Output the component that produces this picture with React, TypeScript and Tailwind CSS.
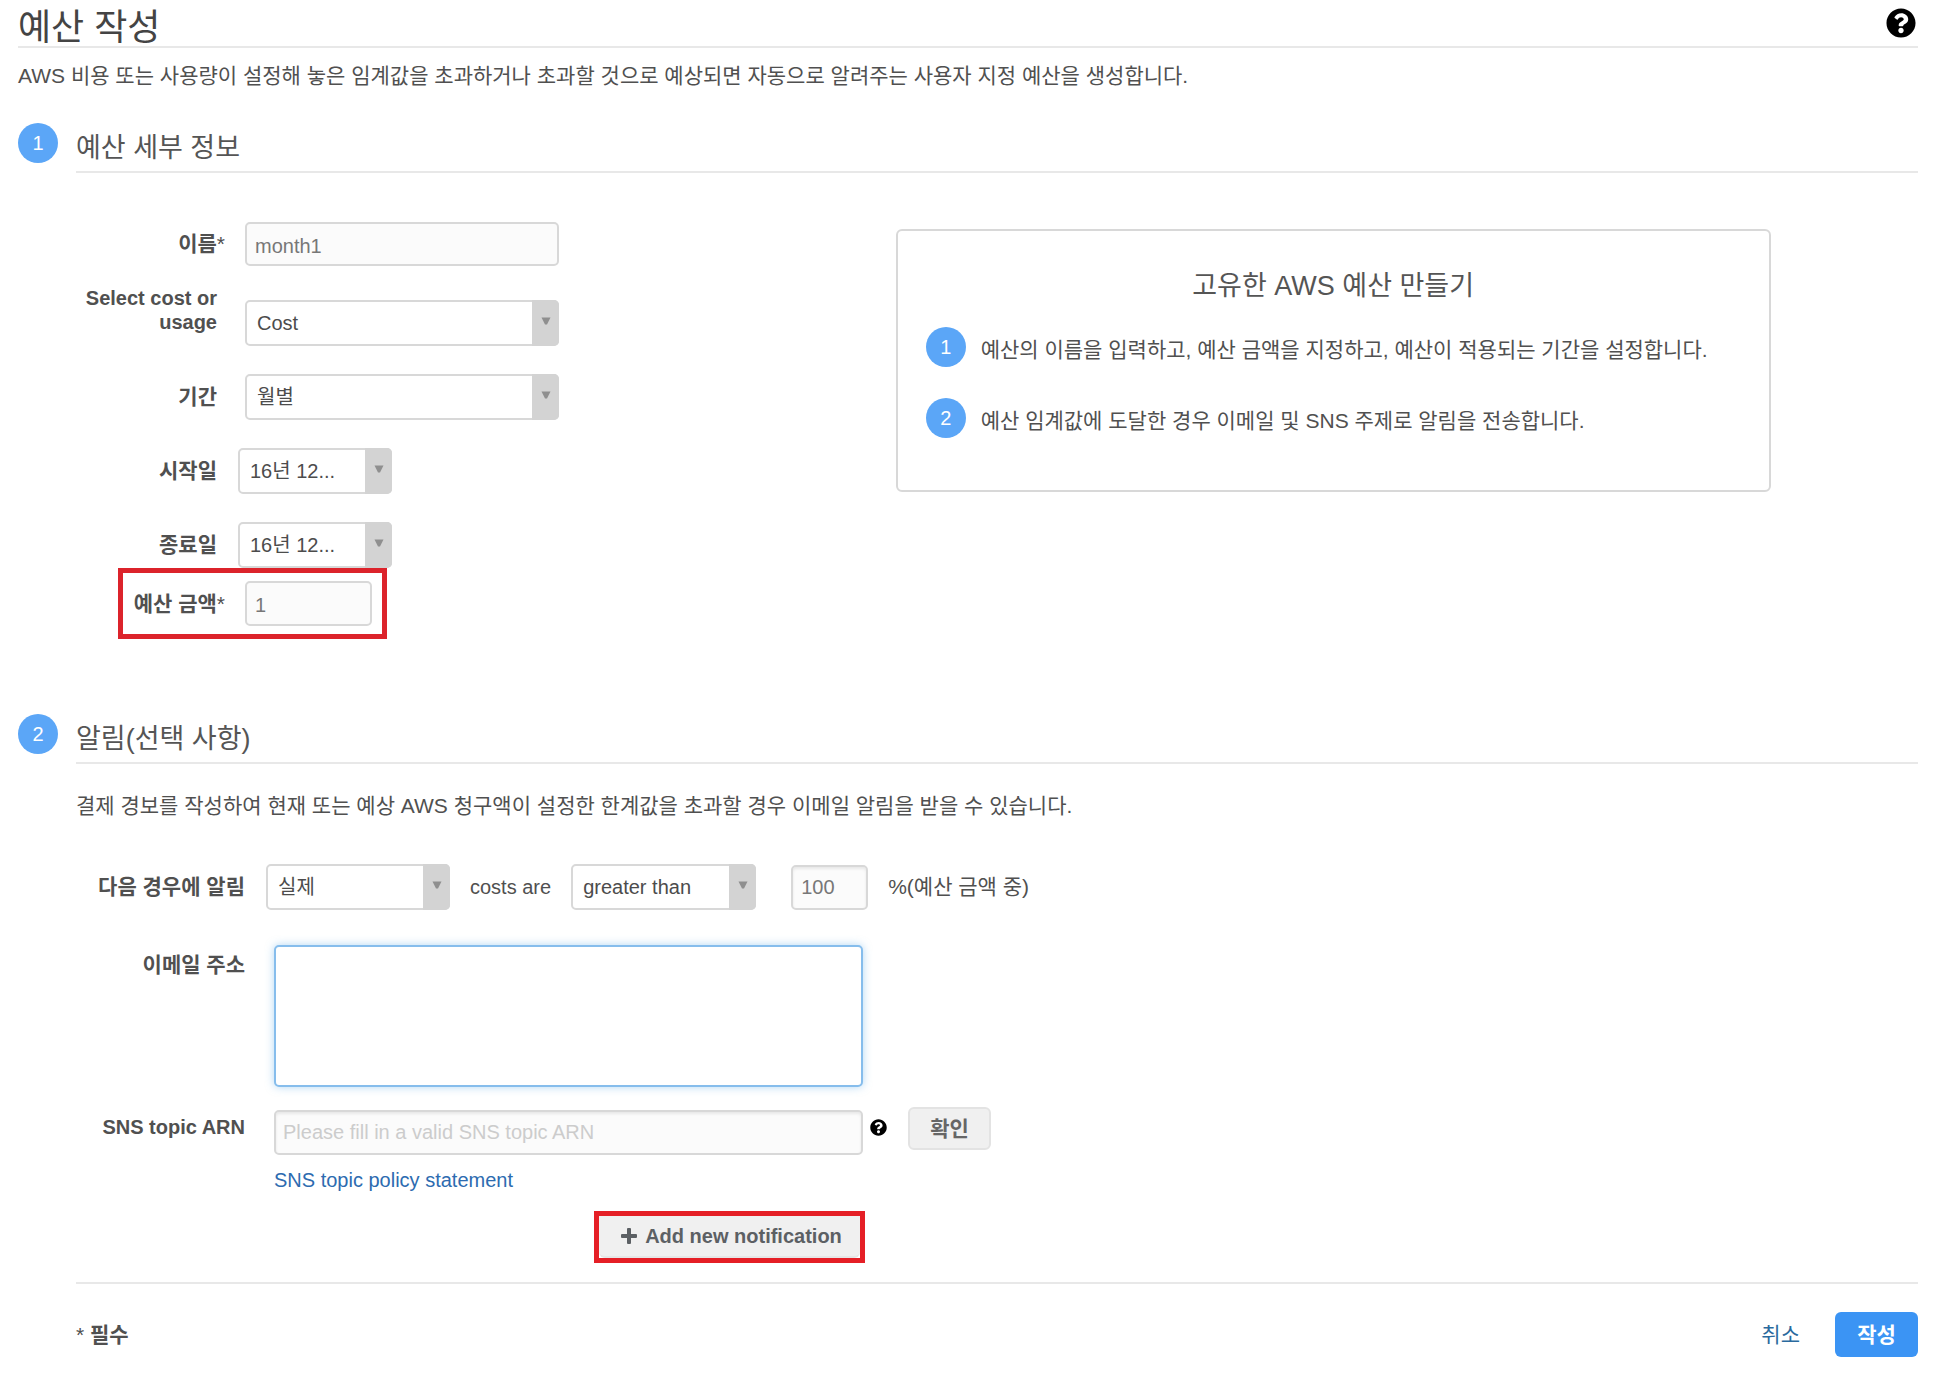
import type { ReactNode } from "react";
import { FaQuestionCircle } from "react-icons/fa";

function StepBadge({ n }: { n: number }) {
  return (
    <span className="flex size-10 shrink-0 items-center justify-center rounded-full bg-[#5ba6f7] text-[20px] leading-6 text-white">
      {n}
    </span>
  );
}

function SectionHeader({ n, title }: { n: number; title: string }) {
  return (
    <div className="flex items-start gap-[18px]">
      <StepBadge n={n} />
      <h2 className="grow border-b-2 border-[#e8e8e8] pt-[2px] text-[27px] leading-[46px] text-[#555]">
        {title}
      </h2>
    </div>
  );
}

function SelectBox({ id, value, width }: { id: string; value: string; width: string }) {
  return (
    <div className={`relative shrink-0 ${width}`}>
      <select
        id={id}
        aria-label={id}
        defaultValue={value}
        className="h-[46px] w-full appearance-none rounded-[5px] border-2 border-[#d8d8d8] bg-white pr-7 pl-[10px] text-[20px] text-[#4c4c4c]"
      >
        <option>{value}</option>
      </select>
      <span className="pointer-events-none absolute inset-y-0 right-0 flex w-[27px] items-center justify-center rounded-r-[5px] bg-[#d3d3d3]">
        <svg viewBox="0 0 10 8" className="mb-1 h-2 w-[10px]">
          <path d="M0.5 0.5h9L6 7.5H4z" fill="#8f8f8f" />
        </svg>
      </span>
    </div>
  );
}

function DetailRow({ id, label, gap, children }: { id: string; label: string; gap: string; children: ReactNode }) {
  return (
    <div className={`flex items-center ${gap}`}>
      <label htmlFor={id} className="w-[149px] shrink-0 pr-2 text-right text-[21px] leading-6 font-bold">
        {label}
      </label>
      {children}
    </div>
  );
}

const inputBase = "rounded-[5px] border-2 border-[#d8d8d8] bg-[#fbfbfb] text-[20px] text-[#777] ";

export default function App() {
  return (
    <main className="bg-white pr-[29px] pb-5 pl-[18px] font-['Liberation_Sans','Noto_Sans_CJK_KR',sans-serif] text-[#505050]">
      <header className="flex items-start justify-between border-b-2 border-[#e8e8e8] pt-2">
        <h1 className="pt-[2px] text-[36px] leading-9 text-[#444]">예산 작성</h1>
        <button type="button" aria-label="도움말" className="mr-[2px] text-black">
          <FaQuestionCircle size={30} />
        </button>
      </header>
      <p className="mt-4 text-[21px] leading-6">
        AWS 비용 또는 사용량이 설정해 놓은 임계값을 초과하거나 초과할 것으로 예상되면 자동으로 알려주는 사용자 지정 예산을 생성합니다.
      </p>

      <section className="mt-[35px]">
        <SectionHeader n={1} title="예산 세부 정보" />
        <div className="flex items-start pl-[58px]">
          <div className="w-[44.5%] pt-[49px]">
            <div className="flex items-center gap-5">
              <label htmlFor="name" className="w-[149px] shrink-0 text-right text-[21px] leading-6 font-bold">
                이름<span className="font-normal">*</span>
              </label>
              <input id="name" defaultValue="month1" className={inputBase + "h-11 w-[314px] pt-1 pl-2"} />
            </div>
            <div className="mt-5 flex items-start gap-5">
              <label htmlFor="cost" className="w-[149px] shrink-0 pr-2 text-right text-[20px] leading-6 font-bold">
                Select cost or usage
              </label>
              <div className="pt-[14px]">
                <SelectBox id="cost" value="Cost" width="w-[314px]" />
              </div>
            </div>
            <div className="mt-7 flex flex-col gap-7">
              <DetailRow id="period" label="기간" gap="gap-5">
                <SelectBox id="period" value="월별" width="w-[314px]" />
              </DetailRow>
              <DetailRow id="start" label="시작일" gap="gap-[13px]">
                <SelectBox id="start" value="16년 12..." width="w-[154px]" />
              </DetailRow>
              <DetailRow id="end" label="종료일" gap="gap-[13px]">
                <SelectBox id="end" value="16년 12..." width="w-[154px]" />
              </DetailRow>
            </div>
            <div className="ml-[42px] flex w-fit items-center gap-5 border-5 border-[#dc232b] py-2 pr-[10px]">
              <label htmlFor="amount" className="w-[102px] shrink-0 text-right text-[21px] leading-6 font-bold">
                예산 금액<span className="font-normal">*</span>
              </label>
              <input id="amount" defaultValue="1" className={inputBase + "h-[45px] w-[127px] pt-1 pl-2"} />
            </div>
          </div>

          <aside className="mt-[56px] w-[47.5%] rounded-[6px] border-2 border-[#d8d8d8] px-7 pt-[39px] pb-[52px]">
            <h3 className="text-center text-[27px] leading-8 text-[#555]">고유한 AWS 예산 만들기</h3>
            <ol className="mt-[25px] flex flex-col gap-[31px]">
              <li className="flex items-center gap-[15px]">
                <StepBadge n={1} />
                <span className="pt-[6px] text-[21px] leading-6">
                  예산의 이름을 입력하고, 예산 금액을 지정하고, 예산이 적용되는 기간을 설정합니다.
                </span>
              </li>
              <li className="flex items-center gap-[15px]">
                <StepBadge n={2} />
                <span className="pt-[6px] text-[21px] leading-6">
                  예산 임계값에 도달한 경우 이메일 및 SNS 주제로 알림을 전송합니다.
                </span>
              </li>
            </ol>
          </aside>
        </div>
      </section>

      <section className="mt-[75px]">
        <SectionHeader n={2} title="알림(선택 사항)" />
        <div className="pl-[58px]">
          <p className="mt-[30px] text-[21px] leading-6">
            결제 경보를 작성하여 현재 또는 예상 AWS 청구액이 설정한 한계값을 초과할 경우 이메일 알림을 받을 수 있습니다.
          </p>

          <div className="mt-[46px] flex items-center">
            <label htmlFor="kind" className="mr-[21px] w-[169px] shrink-0 text-right text-[21px] leading-6 font-bold">
              다음 경우에 알림
            </label>
            <SelectBox id="kind" value="실제" width="w-[184px]" />
            <span className="mx-5 text-[20px] leading-6">costs are</span>
            <SelectBox id="comparison" value="greater than" width="w-[185px]" />
            <input
              id="threshold"
              defaultValue="100"
              className={inputBase + "ml-[35px] h-[45px] w-[77px] pl-2 shadow-[inset_0_2px_3px_rgba(0,0,0,0.08)]"}
            />
            <label htmlFor="threshold" className="ml-5 text-[21px] leading-6">
              %(예산 금액 중)
            </label>
          </div>

          <div className="mt-[35px] flex items-start gap-[29px]">
            <label htmlFor="emails" className="w-[169px] shrink-0 text-right text-[21px] leading-10 font-bold">
              이메일 주소
            </label>
            <textarea
              id="emails"
              className="block h-[142px] w-[589px] resize-none rounded-[5px] border-2 border-[#86bdec] bg-white p-2 text-[20px] shadow-[0_0_8px_rgba(102,175,233,0.5)] outline-none"
            />
          </div>

          <div className="mt-5 flex items-start">
            <label htmlFor="arn" className="mr-[29px] w-[169px] shrink-0 text-right text-[20px] leading-10 font-bold">
              SNS topic ARN
            </label>
            <input
              id="arn"
              placeholder="Please fill in a valid SNS topic ARN"
              className={inputBase + "mt-[3px] h-[45px] w-[589px] pl-[7px] shadow-[inset_0_2px_3px_rgba(0,0,0,0.08)] placeholder:text-[#ccc]"}
            />
            <button type="button" aria-label="SNS topic ARN 도움말" className="mt-3 ml-[7px] text-black">
              <FaQuestionCircle size={17} />
            </button>
            <button
              type="button"
              className="ml-[21px] h-[43px] w-[83px] rounded-[6px] border-2 border-[#e3e3e3] bg-[#f0f0f0] text-[21px] leading-6 font-bold text-[#666]"
            >
              확인
            </button>
          </div>

          <div className="mt-[13px] flex w-[789px] flex-col pl-[198px]">
            <a href="#policy" className="w-fit text-[20px] leading-6 text-[#2d6bb0]">
              SNS topic policy statement
            </a>
            <div className="mt-[19px] w-[271px] self-end border-5 border-[#e51f26]">
              <button
                type="button"
                className="flex h-[42px] w-full items-center justify-center gap-2 rounded-b-[6px] border-b-2 border-[#e6e6e6] bg-[#f0f0f0] pl-1 text-[20px] leading-6 font-bold text-[#5c6064]"
              >
                <svg viewBox="0 0 16 16" className="size-4" fill="currentColor" aria-hidden="true">
                  <path d="M7 0h2q1 0 1 1v5h5q1 0 1 1v2q0 1-1 1h-5v5q0 1-1 1H7q-1 0-1-1v-5H1q-1 0-1-1V7q0-1 1-1h5V1q0-1 1-1z" />
                </svg>
                Add new notification
              </button>
            </div>
          </div>

          <footer className="mt-[19px] flex items-center border-t-2 border-[#e8e8e8] pt-7">
            <p className="grow text-[21px] leading-6 font-bold">
              <span className="font-normal">*</span> 필수
            </p>
            <a href="#cancel" className="mr-[35px] text-[21px] leading-6 text-[#2a6a9e]">
              취소
            </a>
            <button
              type="button"
              className="h-[45px] w-[83px] rounded-[6px] bg-[#3b94f4] text-[21px] leading-6 font-bold text-white"
            >
              작성
            </button>
          </footer>
        </div>
      </section>
    </main>
  );
}
